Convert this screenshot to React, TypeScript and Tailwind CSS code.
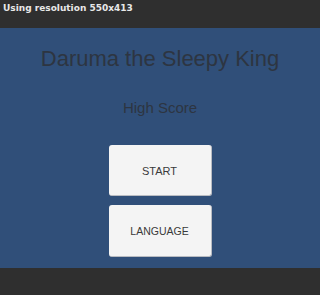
export default function App() {
  return (
    <div className="flex h-[295px] w-[320px] flex-col bg-[#2f2f2f] font-['Liberation_Sans',Arial,sans-serif]">
      <div className="h-[28px] px-[3px] pt-[2px] font-['DejaVu_Sans',sans-serif] text-[9px] font-bold leading-[12px] text-[#e8e8e8]">
        Using resolution 550x413
      </div>
      <div className="flex h-[240px] flex-col items-center bg-[#304f79] text-[#2d3541]">
        <h1 className="mt-[20px] text-[22px] leading-none">Daruma the Sleepy King</h1>
        <p className="mt-[30px] text-[15px] leading-none">High Score</p>
        <div className="mt-[30px] flex flex-col gap-[9px]">
          <button className="h-[51px] w-[103px] rounded-[3px] border-r border-b border-[#b9bcc2] bg-[#f4f4f4] pt-[2px] text-[11px] text-[#3a3a3a]">
            START
          </button>
          <button className="h-[52px] w-[103px] rounded-[3px] border-r border-b border-[#b9bcc2] bg-[#f4f4f4] pt-[2px] text-[10.5px] text-[#3a3a3a]">
            LANGUAGE
          </button>
        </div>
      </div>
    </div>
  )
}
